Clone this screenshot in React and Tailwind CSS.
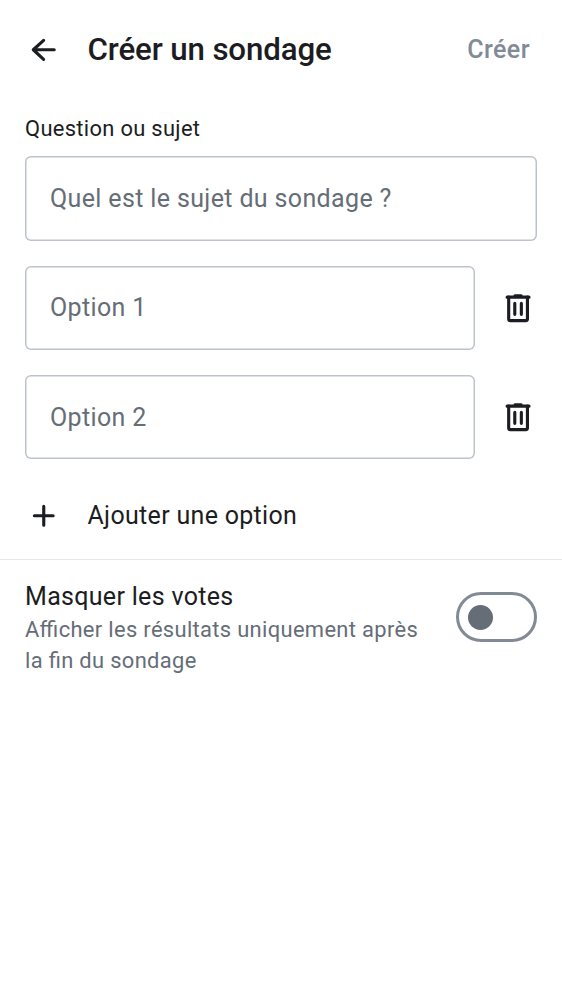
function Trash() {
  return (
    <svg className="mr-[0.5px] h-[37.5px] w-[37.5px] shrink-0" viewBox="0 -0.2 24 24" fill="none" stroke="#1b1d22" strokeWidth="2" strokeLinecap="round" strokeLinejoin="round">
      <path d="M5.2 5h14M10.2 4.1h4" />
      <path d="M6.2 5v14q0 1 1 1h10q1 0 1-1V5" />
      <path d="M10.1 9v7M14.3 9v7" />
    </svg>
  );
}

function Field({ placeholder }) {
  return (
    <div className="flex h-[84.4px] grow items-center rounded-[6px] px-[25px] pt-[0.5px] text-[25px] tracking-[0.36px] text-[#656d77] shadow-[inset_0_0_0_1.5px_#bdc3cc]">
      {placeholder}
    </div>
  );
}

function Option({ label }) {
  return (
    <div className="mt-[25px] flex items-center gap-[24.5px]">
      <Field placeholder={label} />
      <Trash />
    </div>
  );
}

export default function App() {
  return (
    <main className="h-[1000px] w-[562px] overflow-hidden bg-white font-['Roboto',sans-serif] text-[#1b1d22]">
      <header className="flex h-[100px] items-center pr-[32px] pl-[25px]">
        <svg className="h-[37.5px] w-[37.5px] shrink-0" viewBox="0 0 24 24" fill="none" stroke="currentColor" strokeWidth="2" strokeLinecap="round" strokeLinejoin="round">
          <path d="M18.7 12H5.4M11.9 6L5.3 12l6.6 6.2" />
        </svg>
        <h1 className="ml-[25px] grow pt-px text-[31.25px] font-medium tracking-[-0.12px]">Créer un sondage</h1>
        <button className="text-[25px] font-medium tracking-[0.45px] text-[#818a95]">Créer</button>
      </header>
      <section className="px-[25px]">
        <div className="h-[56.2px] pt-[13px] text-[21.9px] leading-[31px] tracking-[0.32px]">Question ou sujet</div>
        <div className="flex"><Field placeholder="Quel est le sujet du sondage ?" /></div>
        <Option label="Option 1" />
        <Option label="Option 2" />
      </section>
      <div className="flex h-[100.6px] items-center border-b border-[#e5e7ea] pt-[13px] pl-[25px]">
        <svg className="h-[37.5px] w-[37.5px] shrink-0" viewBox="0 0 24 24" fill="none" stroke="currentColor" strokeWidth="2" strokeLinecap="round">
          <path d="M12 6v12M6 12h12" />
        </svg>
        <span className="ml-[25px] text-[25px] tracking-[0.31px]">Ajouter une option</span>
      </div>
      <section className="flex justify-between px-[25px] pt-[19px]">
        <div className="w-[406px]">
          <div className="text-[25px] leading-[36px] tracking-[0.31px]">Masquer les votes</div>
          <div className="-mt-px text-[21.9px] leading-[31.25px] tracking-[0.34px] text-[#656d77] [font-feature-settings:'liga'_1]">Afficher les résultats uniquement après<br />la fin du sondage</div>
        </div>
        <div className="mt-[13.2px] flex h-[50px] w-[81px] items-center rounded-full border-3 border-[#818a95] pl-[9px]">
          <div className="h-[25px] w-[25px] rounded-full bg-[#656d77]" />
        </div>
      </section>
    </main>
  );
}
